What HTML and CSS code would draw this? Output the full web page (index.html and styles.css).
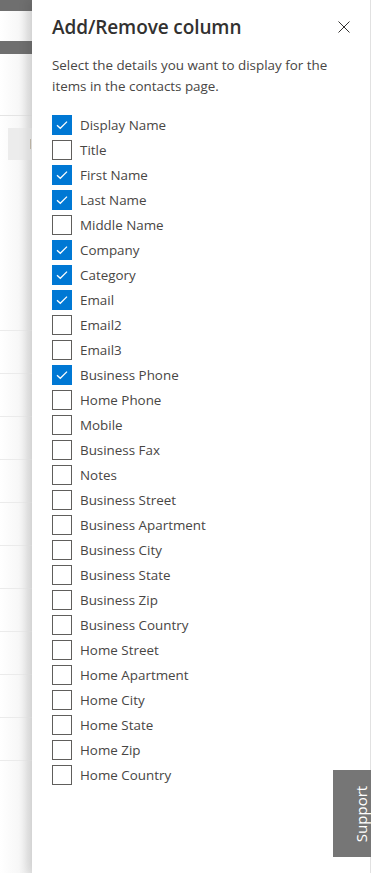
FILE: index.html
```html
<!DOCTYPE html>
<html lang="en">
<head>
    <meta charset="UTF-8">
    <meta name="viewport" content="width=device-width, initial-scale=1.0">
    <title>Add/Remove column</title>
    <link rel="stylesheet" href="styles.css">
</head>
<body>

    <div class="screen">
        <!-- contacts page behind the panel -->
        <div class="backdrop">
            <div class="bar"></div>
            <div class="strip"></div>
            <div class="bar bar-second"></div>
            <div class="toolbar"></div>
            <div class="filter"><span class="filter-mark"></span></div>
            <div class="rows">
                <div class="row"></div>
                <div class="row"></div>
                <div class="row"></div>
                <div class="row"></div>
                <div class="row"></div>
                <div class="row"></div>
                <div class="row"></div>
                <div class="row"></div>
                <div class="row"></div>
                <div class="row"></div>
                <div class="row"></div>
            </div>
        </div>

        <div class="panel">
            <div class="panel-head">
                <h1>Add/Remove column</h1>
                <button class="close" type="button" aria-label="Close">
                    <svg width="12" height="12" viewBox="0 0 12 12">
                        <path d="M0.5 0.5 L11.5 11.5 M11.5 0.5 L0.5 11.5" stroke="#323130" stroke-width="1" fill="none"/>
                    </svg>
                </button>
            </div>

            <p class="intro">Select the details you want to display for the items in the contacts page.</p>

            <ul class="columns" id="columns"></ul>
        </div>

        <button class="support" type="button"><span>Support</span></button>
    </div>

    <script>
        // columns shown in the contacts list
        const columns = [
            ["Display Name", true],
            ["Title", false],
            ["First Name", true],
            ["Last Name", true],
            ["Middle Name", false],
            ["Company", true],
            ["Category", true],
            ["Email", true],
            ["Email2", false],
            ["Email3", false],
            ["Business Phone", true],
            ["Home Phone", false],
            ["Mobile", false],
            ["Business Fax", false],
            ["Notes", false],
            ["Business Street", false],
            ["Business Apartment", false],
            ["Business City", false],
            ["Business State", false],
            ["Business Zip", false],
            ["Business Country", false],
            ["Home Street", false],
            ["Home Apartment", false],
            ["Home City", false],
            ["Home State", false],
            ["Home Zip", false],
            ["Home Country", false]
        ];

        const list = document.getElementById("columns");
        const tick = '<svg width="12" height="10" viewBox="0 0 12 10"><path d="M1 5.2 L4.3 8.3 L11 1.6" stroke="#fff" stroke-width="1.3" fill="none"/></svg>';

        columns.forEach(function (col) {
            const li = document.createElement("li");
            li.className = "column";
            li.innerHTML =
                '<span class="box' + (col[1] ? ' checked' : '') + '">' + (col[1] ? tick : '') + '</span>' +
                '<span class="label">' + col[0] + '</span>';
            li.addEventListener("click", function () {
                col[1] = !col[1];
                const box = li.querySelector(".box");
                box.classList.toggle("checked", col[1]);
                box.innerHTML = col[1] ? tick : "";
            });
            list.appendChild(li);
        });
    </script>

</body>
</html>
```

FILE: styles.css
```css
html, body {
    margin: 0;
    height: 100%;
    overflow: hidden;
}
body {
    font-family: "Open Sans", "Noto Sans", Arial, sans-serif;
    color: #323130;
    background: #fff;
}
.screen {
    position: relative;
    display: flex;
    width: 371px;
    height: 873px;
}
.backdrop {
    width: 32px;
    flex: none;
    background: linear-gradient(to right, #ffffff 0%, #f7f7f7 60%, #e6e6e6 100%);
}
.bar {
    height: 11px;
    background-color: #6f6f6f;
}
.strip {
    height: 30px;
}
.bar-second {
    height: 13px;
}
.toolbar {
    height: 61px;
    border-bottom: 1px solid #e4e4e4;
}
.filter {
    display: flex;
    justify-content: flex-end;
    align-items: center;
    height: 32px;
    margin: 12px 0 0 8px;
    background-color: #ececec;
}
.filter-mark {
    width: 1px;
    height: 10px;
    margin-right: 1px;
    background-color: #c8bfb0;
}
.rows {
    padding-top: 128px;
}
.row {
    height: 42px;
    border-bottom: 1px solid #ebebeb;
}
.panel {
    flex: 1;
    padding: 0 20px;
    background: #fff;
    box-shadow: -4px 0 10px rgba(0, 0, 0, 0.10);
    border-right: 1px solid #e1e1e1;
}
.panel-head {
    display: flex;
    justify-content: space-between;
    align-items: center;
    padding-top: 13px;
}
h1 {
    margin: 0;
    font-size: 19px;
    font-weight: 600;
    line-height: 28px;
    letter-spacing: -0.1px;
    color: #323130;
}
.close {
    display: flex;
    padding: 0;
    margin-right: 0;
    border: none;
    background: none;
    cursor: pointer;
}
.intro {
    margin: 14px 0 15px;
    font-size: 13.4px;
    line-height: 21px;
    color: #484644;
}
.columns {
    list-style: none;
    margin: 0;
    padding: 0;
}
.column {
    display: flex;
    align-items: center;
    height: 25px;
    cursor: pointer;
}
.box {
    display: flex;
    align-items: center;
    justify-content: center;
    width: 20px;
    height: 20px;
    box-sizing: border-box;
    border: 1px solid #605e5c;
    flex: none;
}
.box.checked {
    border-color: #0078d4;
    background-color: #0078d4;
}
.label {
    margin-left: 8px;
    font-size: 13.4px;
    color: #484644;
}
.support {
    position: absolute;
    right: 0;
    bottom: 16px;
    width: 38px;
    height: 87px;
    padding: 0;
    border: none;
    background-color: #767676;
    color: #fff;
    font-family: "Open Sans", "Noto Sans", Arial, sans-serif;
    font-size: 15px;
    cursor: pointer;
}
.support span {
    display: inline-block;
    transform: rotate(-90deg);
}
```
